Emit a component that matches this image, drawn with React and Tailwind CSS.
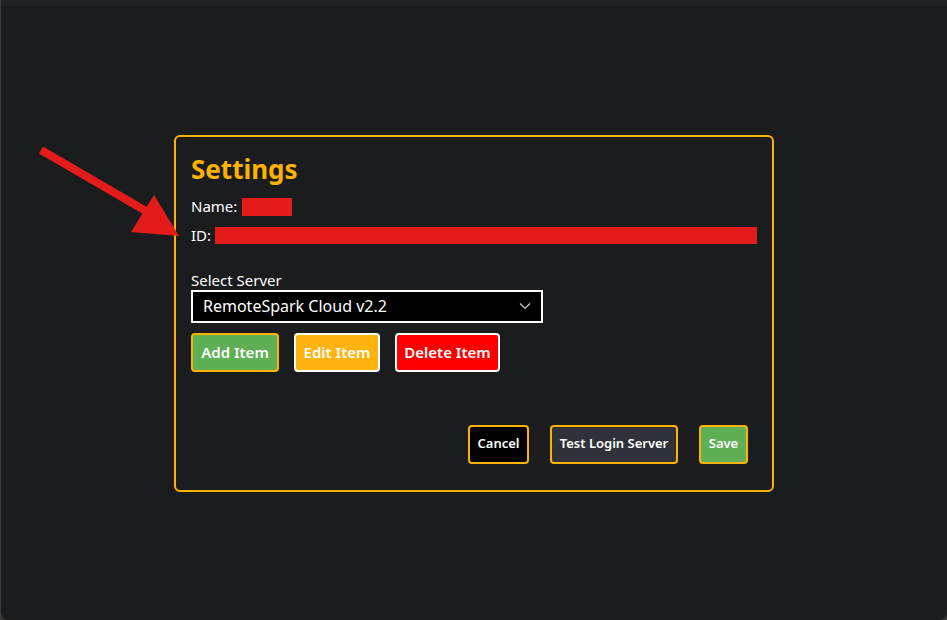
import React from 'react';

const font = { fontFamily: '"Noto Sans", "Open Sans", sans-serif' };

function Arrow() {
    return (
        <svg className="absolute left-0 top-0 pointer-events-none" width="200" height="260" viewBox="0 0 200 260">
            <line x1="40" y1="150" x2="150" y2="214" stroke="#e31b1b" strokeWidth="8" />
            <polygon points="153,195 130,232 178,236" fill="#e31b1b" />
        </svg>
    );
}

export default function App() {
    return (
        <div className="w-[947px] h-[620px] bg-[#3a3a3a] overflow-hidden" style={font}>
            <div className="relative w-full h-full bg-[#1b1c1e] rounded-b-lg border-l border-[#3a3a3a] flex flex-col">
                <div className="h-[6px] bg-[#202427]" />
                <div className="flex-1 flex items-center justify-center">
                    <div className="w-[600px] h-[357px] border-2 border-[#ffb300] rounded-md flex flex-col px-[15px] pt-[14px] pb-[26px] text-white">
                        <h1 className="text-[26px] font-bold text-[#ffb300] leading-[36px]">Settings</h1>
                        <div className="mt-[10px] flex items-center h-[20px] text-[15px]">
                            <span>Name:</span>
                            <span className="ml-[5px] inline-block w-[50px] h-[18px] bg-[#e31b1b]" />
                        </div>
                        <div className="mt-[9px] flex items-center h-[20px] text-[15px]">
                            <span>ID:</span>
                            <span className="ml-[4px] inline-block w-[543px] h-[17px] bg-[#e31b1b]" />
                        </div>
                        <label className="mt-[24px] text-[15px] leading-[20px]">Select Server</label>
                        <div className="w-[352px] h-[33px] bg-black border-2 border-white flex items-center justify-between pl-[10px] pr-[10px]">
                            <span className="text-[16px]">RemoteSpark Cloud v2.2</span>
                            <svg width="12" height="8" viewBox="0 0 12 8" fill="none" stroke="#cfcfcf" strokeWidth="1.2">
                                <path d="M1 1.5 L6 6.5 L11 1.5" />
                            </svg>
                        </div>
                        <div className="mt-[10px] flex gap-[15px]">
                            <button className="h-[39px] w-[88px] bg-[#5faf57] border-2 border-[#ffb300] rounded font-semibold text-[15px]">Add Item</button>
                            <button className="h-[39px] w-[86px] bg-[#ffb30f] border-2 border-white rounded font-semibold text-[15px]">Edit Item</button>
                            <button className="h-[39px] w-[105px] bg-[#ff0000] border-2 border-white rounded font-semibold text-[15px]">Delete Item</button>
                        </div>
                        <div className="mt-auto flex justify-end gap-[21px] pr-[9px]">
                            <button className="h-[39px] w-[61px] bg-black border-2 border-[#ffb300] rounded font-semibold text-[13px]">Cancel</button>
                            <button className="h-[39px] w-[128px] bg-[#2f3238] border-2 border-[#ffb300] rounded font-semibold text-[13px]">Test Login Server</button>
                            <button className="h-[39px] w-[49px] bg-[#5faf57] border-2 border-[#ffb300] rounded font-semibold text-[13px]">Save</button>
                        </div>
                    </div>
                </div>
                <Arrow />
            </div>
        </div>
    );
}
